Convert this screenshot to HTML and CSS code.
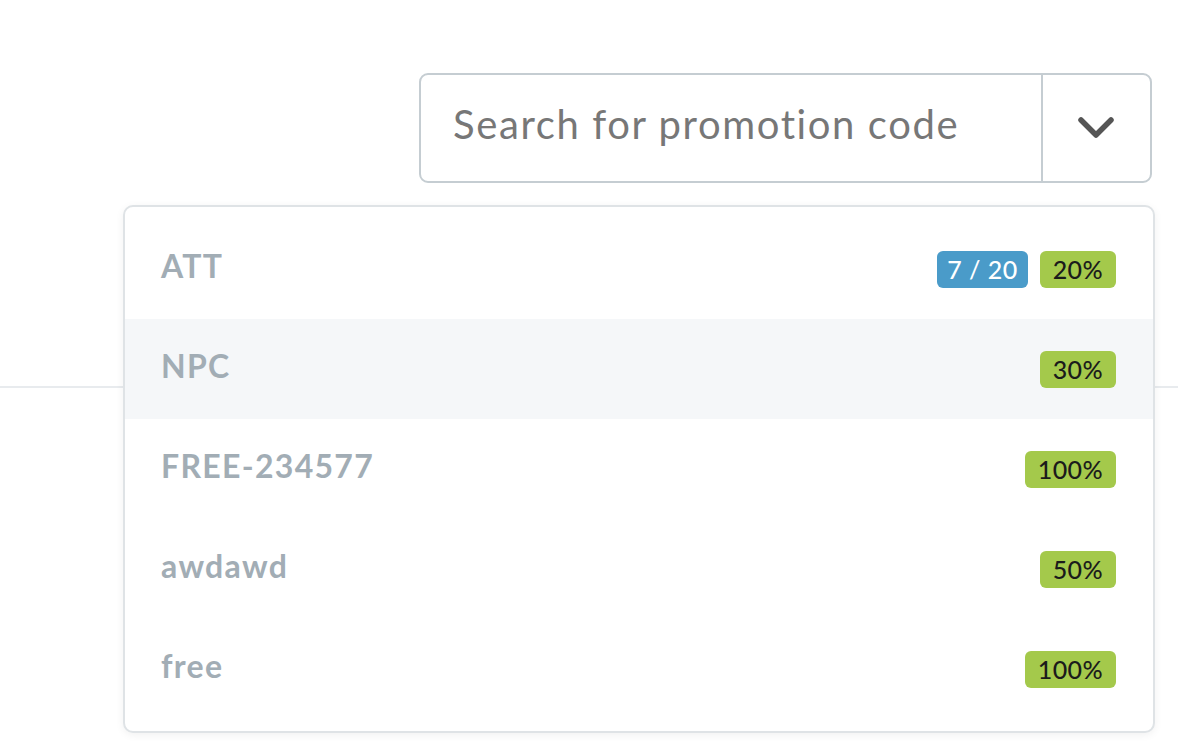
FILE: index.html
```html
<!DOCTYPE html>
<html>
<head>
<meta charset="utf-8">
<link rel="stylesheet" href="styles.css">
</head>
<body>
<div class="page">
  <div class="rule"></div>
  <div class="search-row">
    <div class="search">
      <div class="search-input">Search for promotion code</div>
      <div class="search-toggle">
        <svg width="38" height="24" viewBox="0 0 38 24"><path d="M4 4 L19 19 L34 4" fill="none" stroke="#555" stroke-width="5.5" stroke-linecap="round" stroke-linejoin="round"/></svg>
      </div>
    </div>
  </div>
  <div class="menu">
    <div class="item"><span class="code">ATT</span><span class="badges"><span class="badge blue">7 / 20</span><span class="badge green">20%</span></span></div>
    <div class="item active"><span class="code">NPC</span><span class="badges"><span class="badge green">30%</span></span></div>
    <div class="item"><span class="code">FREE-234577</span><span class="badges"><span class="badge green">100%</span></span></div>
    <div class="item"><span class="code">awdawd</span><span class="badges"><span class="badge green">50%</span></span></div>
    <div class="item"><span class="code">free</span><span class="badges"><span class="badge green">100%</span></span></div>
  </div>
</div>
</body>
</html>
```
FILE: styles.css
```css
* { box-sizing: border-box; }
html, body { margin: 0; padding: 0; background: #fff; }
body { font-family: Lato, "Open Sans", sans-serif; width: 1178px; height: 748px; overflow: hidden; }
.page { position: relative; width: 1178px; height: 748px; padding-top: 73px; }
.rule { position: absolute; left: 0; right: 0; top: 386px; height: 2px; background: #e8ebee; }
.search-row { display: flex; justify-content: flex-start; padding-left: 419px; }
.search {
  display: flex; width: 733px; height: 110px;
  border: 2px solid #c5cdd2; border-radius: 9px; background: #fff;
}
.search-input {
  flex: 1; display: flex; align-items: center; padding-left: 32px;
  font-size: 40px; color: #777; font-weight: 400; padding-bottom: 8px;
  letter-spacing: 1.6px;
}
.search-toggle {
  width: 109px; border-left: 2px solid #c5cdd2;
  display: flex; align-items: center; justify-content: center; padding-right: 2px;
}
.menu {
  position: relative; margin: 22px 0 0 123px; width: 1032px;
  border: 2px solid #dfe3e6; border-radius: 10px; background: #fff;
  padding: 12px 0;
  box-shadow: 0 2px 8px rgba(0,0,0,0.06);
}
.item {
  height: 100px; display: flex; align-items: center; justify-content: space-between;
  padding: 0 37px 0 36px;
}
.item.active { background: #f5f7f9; }
.code { font-size: 32px; font-weight: 700; color: #a2adb5; letter-spacing: 1.3px; margin-top: -8px; }
.badges { display: flex; gap: 12px; margin-top: 0; }
.badge {
  height: 37px; padding: 0 13px; border-radius: 6px;
  display: flex; align-items: center; font-size: 25px; font-weight: 500;
  letter-spacing: 0.4px;
}
.badge.green { background: #a4c94b; color: #1b1b1b; }
.badge.blue { background: #4a9bc9; color: #fff; letter-spacing: 0.5px; padding: 0 10px; }
```
